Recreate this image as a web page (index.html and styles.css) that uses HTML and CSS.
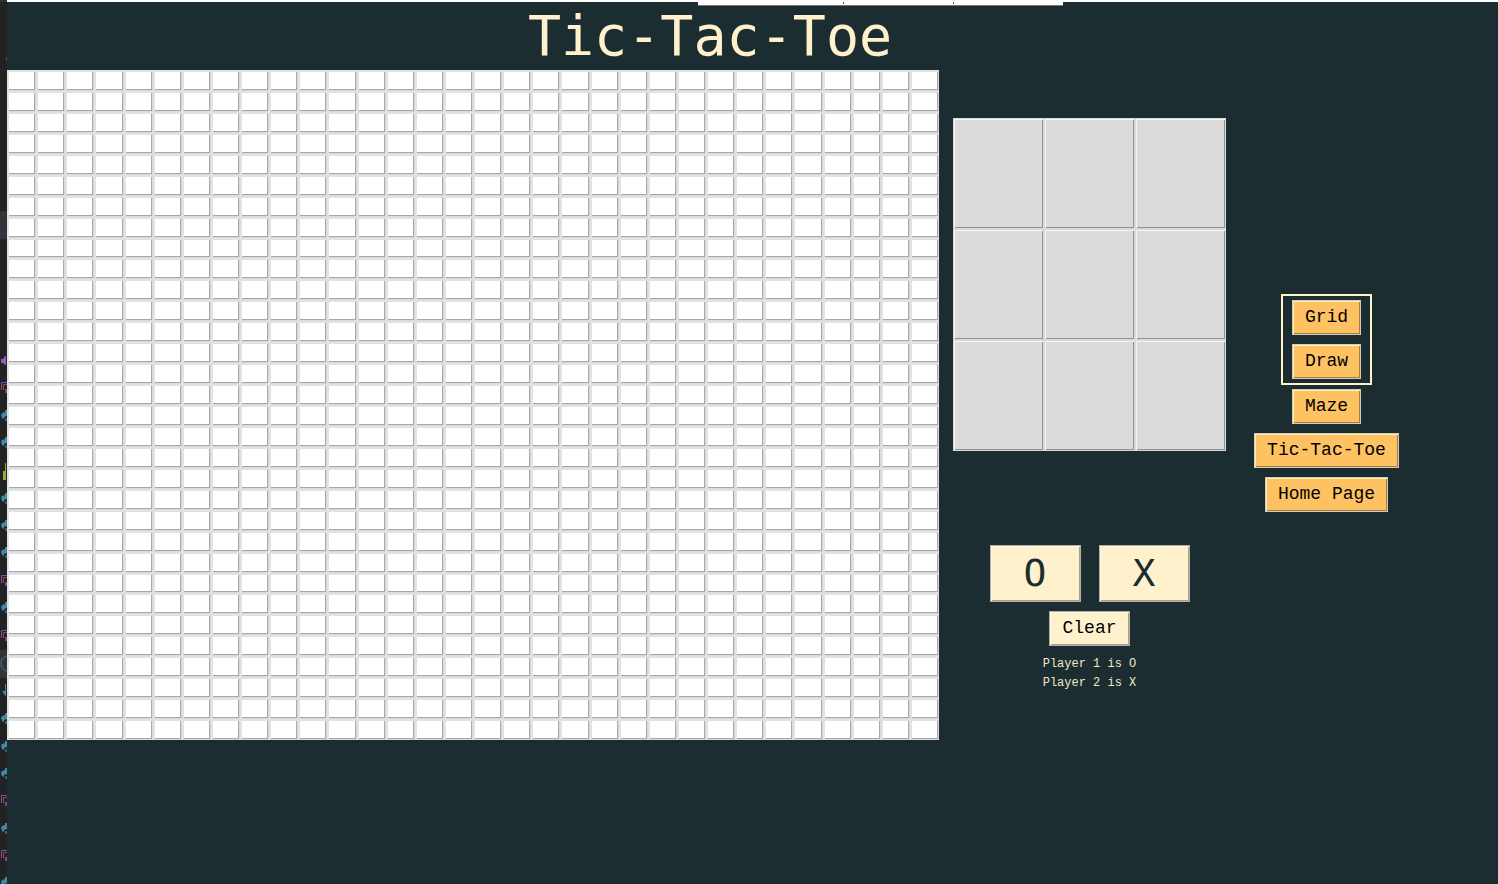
FILE: index.html
```html
<!DOCTYPE html>
<html lang="en">
<head>
<meta charset="utf-8">
<title>Tic-Tac-Toe</title>
<link rel="stylesheet" href="styles.css">
</head>
<body>
<div class="desktop">
  <aside class="strip" aria-hidden="true">
    <svg class="strip-icons" width="7" height="884" viewBox="0 0 7 884">
      <defs>
        <g id="py"><path d="M7-5H5V-3L2-2L1 0L2 3L4 4V2L7 1Z" fill="#4088a8"/><path d="M5 3H7V6H5Z" fill="#2f5f86"/></g>
        <g id="pkg"><path d="M1.5 3V-4.5H7" fill="none" stroke="#7450c0" stroke-width="1"/><path d="M3.5 3V-2.5H7" fill="none" stroke="#a34a28" stroke-width="1"/><path d="M5 2H7V6H5Z" fill="#7c4698"/></g>
      </defs>
      <path d="M0 0H7V2H0Z" fill="#333"/>
      <path d="M0 211H7V239H0ZM0 650H7V678H0Z" fill="#33333a"/>
      <path d="M6 57H7V61H6Z" fill="#2a5577"/>
      <path d="M1 359H3L5 356H6V365H5L3 363H1Z" fill="#8b5cc4"/>
      <path d="M5 463H6V480H3V471H5Z" fill="#a3a62e"/>
      <path d="M7 656C-1 658-1 669 7 671" fill="none" stroke="#3e7da0" stroke-width="1"/>
      <path d="M5 684H6V697L2 691H5Z" fill="#4088a8"/>
      <use href="#pkg" y="387"/><use href="#pkg" y="580"/><use href="#pkg" y="635"/><use href="#pkg" y="800"/><use href="#pkg" y="855"/>
      <use href="#py" y="415"/><use href="#py" y="442"/><use href="#py" y="498"/><use href="#py" y="525"/><use href="#py" y="552"/><use href="#py" y="607"/><use href="#py" y="718"/><use href="#py" y="746"/><use href="#py" y="773"/><use href="#py" y="828"/><use href="#py" y="882"/>
    </svg>
  </aside>
  <div class="app">
    <div class="popup"><span></span><span></span><span></span></div>
    <h1 class="title">Tic-Tac-Toe</h1>
    <main class="columns">
      <div class="pixels" id="pixels"></div>
      <section class="game">
        <div class="board">
          <button class="cell" aria-label="Row 1, column 1"></button>
          <button class="cell" aria-label="Row 1, column 2"></button>
          <button class="cell" aria-label="Row 1, column 3"></button>
          <button class="cell" aria-label="Row 2, column 1"></button>
          <button class="cell" aria-label="Row 2, column 2"></button>
          <button class="cell" aria-label="Row 2, column 3"></button>
          <button class="cell" aria-label="Row 3, column 1"></button>
          <button class="cell" aria-label="Row 3, column 2"></button>
          <button class="cell" aria-label="Row 3, column 3"></button>
        </div>
        <div class="marks">
          <button class="btn mark">O</button>
          <button class="btn mark">X</button>
        </div>
        <button class="btn clear">Clear</button>
        <div class="players">
          <p>Player 1 is O</p>
          <p>Player 2 is X</p>
        </div>
      </section>
      <nav class="menu">
        <div class="group">
          <button class="btn">Grid</button>
          <button class="btn">Draw</button>
        </div>
        <button class="btn">Maze</button>
        <button class="btn">Tic-Tac-Toe</button>
        <button class="btn">Home Page</button>
      </nav>
    </main>
  </div>
</div>
<script src="grid.js"></script>
</body>
</html>
```
FILE: grid.js
```js
const pixels = document.getElementById('pixels');
const size = 32;
for (let i = 0; i < size * size; i++) {
  const cell = document.createElement('button');
  cell.className = 'pixel';
  cell.setAttribute('aria-label', `Pixel ${Math.floor(i / size) + 1}, ${i % size + 1}`);
  pixels.appendChild(cell);
}
```
FILE: styles.css
```css
* { box-sizing: border-box; }
body {
  margin: 0;
  background: #1c2d31;
  font-family: "Liberation Mono", monospace;
}
button { font-family: inherit; margin: 0; padding: 0; border-radius: 0; }
.desktop { display: flex; height: 100vh; overflow: hidden; }
.strip { flex: 0 0 7px; overflow: hidden; background: #222; }
.strip-icons { display: block; }
.app {
  flex: 1;
  min-width: 0;
  position: relative;
  border-top: 2px solid #fff;
  padding-right: 85px;
}
.popup {
  position: absolute;
  top: -2px;
  left: 691px;
  width: 365px;
  height: 6px;
  display: grid;
  grid-template-columns: 145px 110px 1fr;
  background: #fff;
  border-bottom: 1px solid #77766c;
}
.popup span + span { border-left: 1px solid #555; margin-top: 2px; height: 2px; }
.title {
  margin: 0;
  text-align: center;
  font: 400 55px/68px "DejaVu Sans Mono", monospace;
  color: #fff1cc;
}
.columns { display: grid; grid-template-columns: 932fr 301fr 173fr; align-items: start; }
.pixels {
  display: grid;
  grid-template-columns: repeat(32, 1fr);
  grid-template-rows: repeat(32, 1fr);
  aspect-ratio: 932 / 670;
  background: #dedede;
  box-shadow: inset 0 1px #b8b8b8;
}
.pixel {
  min-width: 0;
  min-height: 0;
  background: #fff;
  border: 1px solid #d9d9d9;
  border-top: 2px solid #e2e2e2;
  border-left: 2px solid #e2e2e2;
  box-shadow: inset -1px -1px #a8a8a8;
}
.game { display: flex; flex-direction: column; align-items: center; padding: 48px 14px 0; }
.board {
  width: 100%;
  aspect-ratio: 273 / 333;
  display: grid;
  grid-template: repeat(3, 1fr) / repeat(3, 1fr);
}
.cell {
  background: #dbdbdb;
  border: 1px solid #d9d9d9;
  box-shadow: inset 1px 1px #f5f5f5, inset -1px -1px #929292;
}
.marks { display: flex; gap: 18px; margin-top: 94px; }
.btn {
  height: 35px;
  padding: 0 12px 2px;
  border: 1px solid #cfcdc0;
  background: #ffc262;
  box-shadow: inset 1px 1px #fff0b0, inset -1px -1px #a87d3a;
  color: #000;
  font-size: 18px;
}
.mark, .clear {
  background: #fff1cc;
  border-color: #b0afa8;
  box-shadow: inset 1px 1px #fff8e6, inset -1px -1px #a8a08c;
}
.mark {
  width: 91px;
  height: 57px;
  font-family: "DejaVu Sans Mono", monospace;
  font-size: 38px;
  line-height: 52px;
  color: #1c2d31;
}
.clear { margin-top: 9px; }
.players { margin-top: 9px; font-size: 12px; line-height: 19px; color: #f0e6c6; }
.players p { margin: 0; }
.menu {
  display: flex;
  flex-direction: column;
  align-items: center;
  gap: 9px;
  padding-top: 224px;
}
.group {
  display: flex;
  flex-direction: column;
  gap: 9px;
  padding: 4px 9px;
  border: 2px solid #fff1cc;
  margin-bottom: -5px;
}
```
